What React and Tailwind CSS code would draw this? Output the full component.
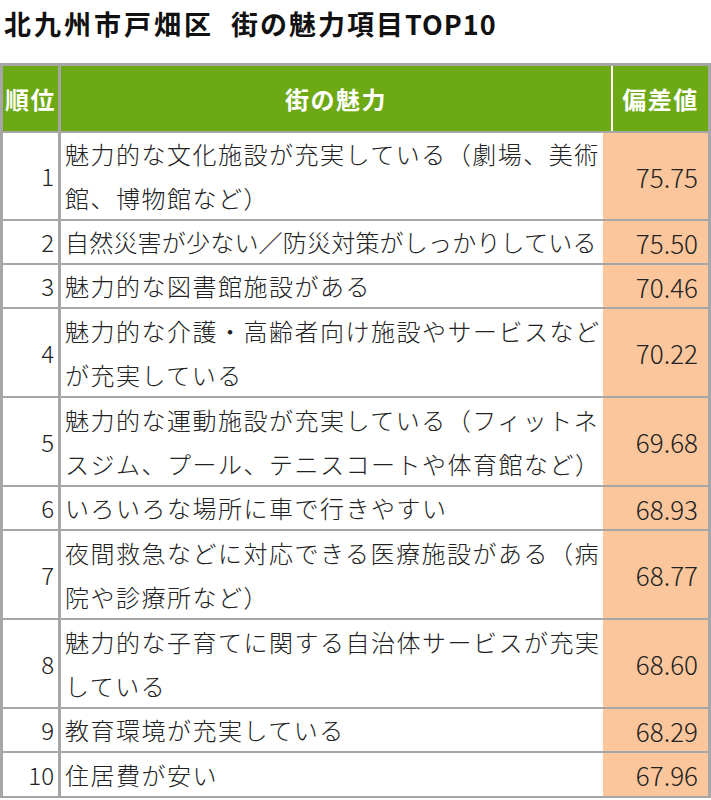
const ROWS = [
  { rank: 1, text: ['魅力的な文化施設が充実している（劇場、美術', '館、博物館など）'], value: '75.75', h: 'h-[88px]' },
  { rank: 2, text: ['自然災害が少ない／防災対策がしっかりしている'], value: '75.50', h: 'h-[44px]', tight: true },
  { rank: 3, text: ['魅力的な図書館施設がある'], value: '70.46', h: 'h-[44px]' },
  { rank: 4, text: ['魅力的な介護・高齢者向け施設やサービスなど', 'が充実している'], value: '70.22', h: 'h-[89px]' },
  { rank: 5, text: ['魅力的な運動施設が充実している（フィットネ', 'スジム、プール、テニスコートや体育館など）'], value: '69.68', h: 'h-[89px]' },
  { rank: 6, text: ['いろいろな場所に車で行きやすい'], value: '68.93', h: 'h-[44px]' },
  { rank: 7, text: ['夜間救急などに対応できる医療施設がある（病', '院や診療所など）'], value: '68.77', h: 'h-[89px]' },
  { rank: 8, text: ['魅力的な子育てに関する自治体サービスが充実', 'している'], value: '68.60', h: 'h-[89px]' },
  { rank: 9, text: ['教育環境が充実している'], value: '68.29', h: 'h-[44px]' },
  { rank: 10, text: ['住居費が安い'], value: '67.96', h: 'h-[45px]' },
]

const font = { fontFamily: '"Noto Sans CJK JP", "Noto Sans", sans-serif' }

export default function App() {
  return (
    <div className="w-[711px] h-[800px] bg-white text-[#222]" style={font}>
      {/* タイトル */}
      <div className="h-[63px] pl-[4px] pt-[4px]">
        <h1 className="text-[27px] leading-[40px] font-bold text-[#111] whitespace-nowrap">
          <span className="tracking-[3px]">北九州市戸畑区</span>
          <span className="inline-block w-[17px]" />
          <span className="tracking-[2px]">街の魅力項目</span>
          <span className="tracking-[1px]">TOP10</span>
        </h1>
      </div>

      <div className="border-l-[3px] border-r-[3px] border-t-[3px] border-[#a6a6a6]">
        {/* 見出し行 */}
        <div className="flex h-[67px] border-b-2 border-[#a6a6a6] bg-[#6ca914] text-white font-bold text-[24px] tracking-[1.5px]">
          <div className="w-[55px] shrink-0 flex items-center justify-center">順位</div>
          <div className="w-[3px] shrink-0 bg-[#a6a6a6]" />
          <div className="flex-1 min-w-0 flex items-center justify-center">街の魅力</div>
          <div className="w-[95px] shrink-0 border-l-2 border-white flex items-center justify-center box-content">偏差値</div>
        </div>

        {ROWS.map((r) => (
          <div key={r.rank} className={`flex ${r.h} border-b-2 border-[#a6a6a6] box-border`}>
            <div className="w-[55px] shrink-0 flex items-center justify-end pr-[4px] text-[24px] font-light">{r.rank}</div>
            <div className="w-[3px] shrink-0 bg-[#a6a6a6]" />
            <div
              className={`flex-1 min-w-0 overflow-hidden flex flex-col justify-center pl-[4px] text-[24px] leading-[44px] font-light whitespace-nowrap ${
                r.tight ? 'tracking-[0.2px]' : 'tracking-[1.5px]'
              }`}
            >
              {r.text.map((t) => (
                <div key={t}>{t}</div>
              ))}
            </div>
            <div className="w-[95px] shrink-0 border-l-2 border-white box-content bg-[#fbc69b] flex items-center justify-end pr-[10px] text-[26px] font-light">
              {r.value}
            </div>
          </div>
        ))}
      </div>
    </div>
  )
}
